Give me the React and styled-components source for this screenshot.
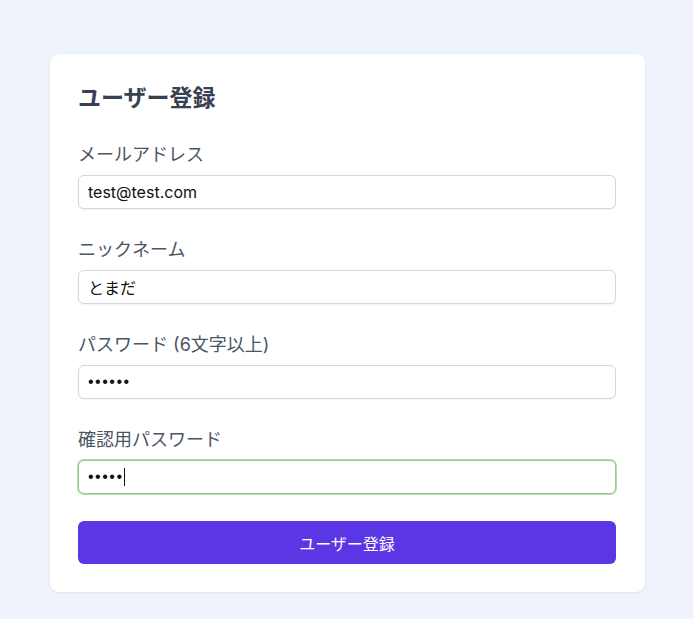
import React from 'react'
import styled, { createGlobalStyle } from 'styled-components'

const GlobalStyle = createGlobalStyle`
  html, body {
    margin: 0;
    padding: 0;
    background: #eff3fc;
    font-family: Inter, "Noto Sans CJK JP", sans-serif;
  }
`

const Page = styled.div`
  min-height: 619px;
  padding: 54px 48px 0 50px;
  box-sizing: border-box;
`

const Card = styled.form`
  background: #ffffff;
  border-radius: 9px;
  box-shadow: 0 1px 3px rgba(30, 41, 80, 0.08);
  padding: 29px 29px 28px 28px;
  display: flex;
  flex-direction: column;
`

const Title = styled.h2`
  margin: 0 0 30px;
  font-size: 23px;
  line-height: 30px;
  font-weight: 700;
  color: #374151;
`

const Field = styled.div`
  display: flex;
  flex-direction: column;
  margin-bottom: 29px;
`

const Label = styled.label`
  font-size: 18px;
  line-height: 24px;
  color: #4b5563;
  margin-bottom: 8px;
`

const InputWrap = styled.div`
  position: relative;
  display: flex;
  flex-direction: column;
`

const Input = styled.input`
  height: 34px;
  box-sizing: border-box;
  padding: 0 9px;
  border: 1px solid ${p => (p.$focused ? '#9ccb8f' : '#d4d7dd')};
  border-radius: 6px;
  box-shadow: ${p => (p.$focused ? '0 0 0 1px #b7dbae' : '0 1px 2px rgba(0, 0, 0, 0.06)')};
  font-family: ${p => (p.$masked ? '"Liberation Sans", Arial' : 'Inter, "Noto Sans CJK JP"')}, sans-serif;
  font-size: 16px;
  letter-spacing: ${p => (p.$masked ? '1.5px' : 'normal')};
  color: #111111;
  caret-color: transparent;
  background: #ffffff;
  outline: none;
`

// drawn text cursor for the active field
const Caret = styled.span`
  position: absolute;
  top: 8px;
  width: 1px;
  height: 18px;
  background: #111111;
  pointer-events: none;
`

const Button = styled.button`
  margin-top: -2px;
  height: 43px;
  border: none;
  border-radius: 6px;
  background: #5b36e4;
  color: #ffffff;
  font-family: Inter, "Noto Sans CJK JP", sans-serif;
  font-size: 16px;
  cursor: pointer;
`

const fields = [
  { label: 'メールアドレス', value: 'test@test.com' },
  { label: 'ニックネーム', value: 'とまだ' },
  { label: 'パスワード (6文字以上)', value: '••••••', masked: true },
  { label: '確認用パスワード', value: '•••••', masked: true, focused: true },
]

function App() {
  return (
    <>
      <GlobalStyle />
      <Page>
        <Card onSubmit={e => e.preventDefault()}>
          <Title>ユーザー登録</Title>
          {fields.map(f => (
            <Field key={f.label}>
              <Label>{f.label}</Label>
              <InputWrap>
                <Input
                  type="text"
                  defaultValue={f.value}
                  $masked={f.masked}
                  $focused={f.focused}
                  readOnly
                />
                {f.focused && <Caret style={{ left: 10 + f.value.length * 7.1 }} />}
              </InputWrap>
            </Field>
          ))}
          <Button type="submit">ユーザー登録</Button>
        </Card>
      </Page>
    </>
  )
}

export default App
